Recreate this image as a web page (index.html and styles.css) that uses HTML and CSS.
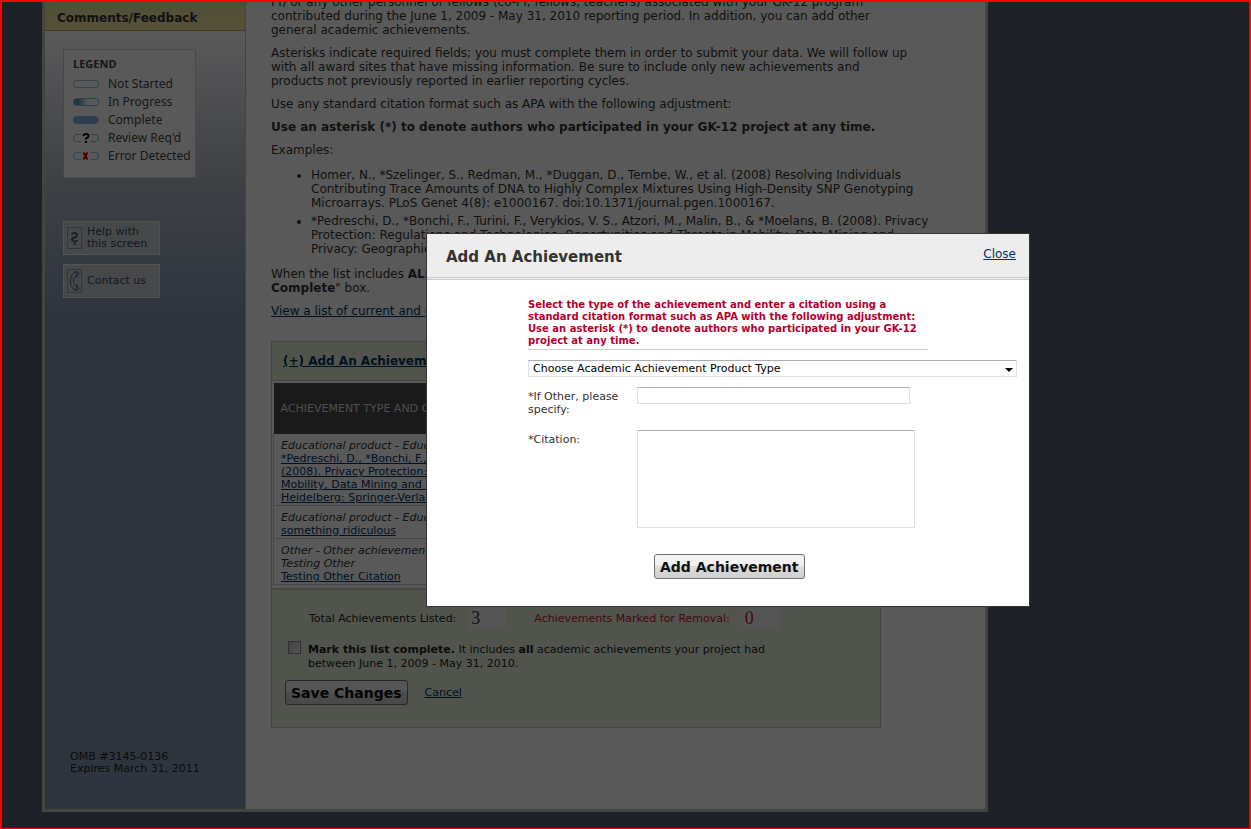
FILE: index.html
```html
<!DOCTYPE html>
<html lang="en">
<head>
  <meta charset="UTF-8">
  <title>Add An Achievement</title>
  <link rel="stylesheet" href="styles.css">
</head>
<body>
  <div class="wrapper">
    <!-- Sidebar -->
    <div class="sidebar">
      <a class="nav-item" href="#">Comments/Feedback</a>

      <div class="legend">
        <h3>LEGEND</h3>
        <ul>
          <li>
            <svg width="26" height="10" viewBox="0 0 26 10"><rect class="pill" x="0.5" y="1.5" width="25" height="7" rx="3"/></svg>
            Not Started
          </li>
          <li>
            <svg width="26" height="10" viewBox="0 0 26 10">
              <defs><linearGradient id="half"><stop offset="0.2" stop-color="#5f9cc4"/><stop offset="0.6" stop-color="#fff"/></linearGradient></defs>
              <rect class="pill half" x="0.5" y="1.5" width="25" height="7" rx="3"/>
            </svg>
            In Progress
          </li>
          <li>
            <svg width="26" height="10" viewBox="0 0 26 10"><rect class="pill full" x="0.5" y="1.5" width="25" height="7" rx="3"/></svg>
            Complete
          </li>
          <li>
            <svg width="26" height="10" viewBox="0 0 26 10">
              <path class="pill" d="M8 1.5H4a3.5 3.5 0 0 0 0 7h4M18 1.5h4a3.5 3.5 0 0 1 0 7h-4"/>
              <path class="mark" d="M10.5 3q0-2 2.5-2t2.5 2q0 1-1.5 1.8T13 6.5M13 8v2"/>
            </svg>
            Review Req'd
          </li>
          <li>
            <svg width="26" height="10" viewBox="0 0 26 10">
              <path class="pill" d="M8 1.5H4a3.5 3.5 0 0 0 0 7h4M18 1.5h4a3.5 3.5 0 0 1 0 7h-4"/>
              <path class="mark error" d="M10.5 1.5l4 7M14.5 1.5l-4 7"/>
            </svg>
            Error Detected
          </li>
        </ul>
      </div>

      <button type="button" class="side-btn">
        <svg width="16" height="24" viewBox="0 0 16 24">
          <rect x="1.5" y="1.5" width="14" height="21"/>
          <path class="thick" d="M6 8.5q0-1.500 2.500-1.500t2.500 2-2.500 2.500-2.500 2 2.500 2 2.500-1.500M8.500 17v2"/>
        </svg>
        <span>Help with<br>this screen</span>
      </button>
      <button type="button" class="side-btn">
        <svg width="16" height="28" viewBox="0 0 16 28">
          <rect x="1.5" y="2.5" width="14" height="23"/>
          <path class="phone" d="M10 4.500C2.500 7 2.500 21 10 23.500l3-1.500-2-4-2 .5c-2-2-2-7 0-9l2 .5 2-4zM10 4.500l1 5M10 23.500l1-5.500"/>
        </svg>
        <span>Contact us</span>
      </button>

      <p class="omb">OMB #3145-0136<br>Expires March 31, 2011</p>
    </div>

    <!-- Main content -->
    <div class="main">
      <div class="intro">
        <p>PI) or any other personnel or fellows (co-PI, fellows, teachers) associated with your GK-12 program<br>contributed during the June 1, 2009 - May 31, 2010 reporting period. In addition, you can add other<br>general academic achievements.</p>
        <p>Asterisks indicate required fields; you must complete them in order to submit your data. We will follow up<br>with all award sites that have missing information. Be sure to include only new achievements and<br>products not previously reported in earlier reporting cycles.</p>
        <p>Use any standard citation format such as APA with the following adjustment:</p>
        <p><strong>Use an asterisk (*) to denote authors who participated in your GK-12 project at any time.</strong></p>
        <p>Examples:</p>
        <ul>
          <li>Homer, N., *Szelinger, S., Redman, M., *Duggan, D., Tembe, W., et al. (2008) Resolving Individuals<br>Contributing Trace Amounts of DNA to Highly Complex Mixtures Using High-Density SNP Genotyping<br>Microarrays. PLoS Genet 4(8): e1000167. doi:10.1371/journal.pgen.1000167.</li>
          <li>*Pedreschi, D., *Bonchi, F., Turini, F., Verykios, V. S., Atzori, M., Malin, B., &amp; *Moelans, B. (2008). Privacy<br>Protection: Regulations and Technologies, Opportunities and Threats in Mobility, Data Mining and<br>Privacy: Geographic</li>
        </ul>
        <p>When the list includes <strong>ALL</strong> achievements, check the "<strong>Mark This List<br>Complete</strong>" box.</p>
        <p><a href="#">View a list of current and past achievements</a></p>
      </div>

      <form class="list-box">
        <a class="add-link" href="#">(+) Add An Achievement</a>
        <div class="table-wrap">
          <table>
            <thead>
              <tr><th>ACHIEVEMENT TYPE AND CITATION</th></tr>
            </thead>
            <tbody>
              <tr>
                <td><em>Educational product - Educational product</em><br><a href="#">*Pedreschi, D., *Bonchi, F., Turini, F., Verykios, V. S.<br>(2008). Privacy Protection: Regulations and Threats in<br>Mobility, Data Mining and Privacy: Geographic Knowledge.<br>Heidelberg: Springer-Verlag.</a></td>
              </tr>
              <tr>
                <td><em>Educational product - Educational product</em><br><a href="#">something ridiculous</a></td>
              </tr>
              <tr>
                <td><em>Other - Other achievement<br>Testing Other</em><br><a href="#">Testing Other Citation</a></td>
              </tr>
            </tbody>
          </table>
        </div>
        <div class="totals">
          <label for="total">Total Achievements Listed:</label>
          <input type="text" id="total" value="3" readonly>
          <label class="removal" for="removed">Achievements Marked for Removal:</label>
          <input class="removal" type="text" id="removed" value="0" readonly>
        </div>
        <div class="complete">
          <input type="checkbox" id="complete">
          <label for="complete"><strong>Mark this list complete.</strong> It includes <strong>all</strong> academic achievements your project had<br>between June 1, 2009 - May 31, 2010.</label>
        </div>
        <div class="actions">
          <button type="button" class="btn">Save Changes</button>
          <a href="#">Cancel</a>
        </div>
      </form>
    </div>
  </div>

  <div class="overlay"></div>

  <!-- Add achievement dialog -->
  <div class="modal" role="dialog" aria-labelledby="modal-title">
    <div class="modal-header">
      <h2 id="modal-title">Add An Achievement</h2>
      <a href="#">Close</a>
    </div>
    <form class="modal-body">
      <p class="notice">Select the type of the achievement and enter a citation using a<br>standard citation format such as APA with the following adjustment:<br>Use an asterisk (*) to denote authors who participated in your GK-12<br>project at any time.</p>
      <div class="select-wrap">
        <select aria-label="Product type">
          <option>Choose Academic Achievement Product Type</option>
        </select>
        <svg width="8" height="4" viewBox="0 0 8 4"><path d="M0 0h8L4 4z"/></svg>
      </div>
      <div class="field">
        <label for="other">*If Other, please specify:</label>
        <input type="text" id="other">
      </div>
      <div class="field">
        <label for="citation">*Citation:</label>
        <textarea id="citation"></textarea>
      </div>
      <button type="button" class="btn">Add Achievement</button>
    </form>
  </div>
</body>
</html>
```
FILE: styles.css
```css
* {
  box-sizing: border-box;
}
body {
  position: relative;
  margin: 0;
  min-height: 100vh;
  padding: 0 40px 16px;
  border: 2px solid #f00;
  background: #595e75;
  color: #333;
  font-family: Verdana, "DejaVu Sans", sans-serif;
  font-size: 12px;
  line-height: 14px;
  overflow: hidden;
}
a {
  color: #036;
}
p, ul, h2, h3 {
  margin: 0;
}
.wrapper {
  display: flex;
  max-width: 946px;
  border: 3px solid #c2c5b8;
  border-top: 0;
  background: #fff;
}

/* Sidebar */
.sidebar {
  display: flex;
  flex-direction: column;
  align-items: flex-start;
  flex: 0 0 201px;
  border-right: 1px solid #b9c0cc;
  background: linear-gradient(#fff 30px, #f0f1f4 60px, #b4b8c4 180px, #8697b4 310px);
}
.nav-item {
  align-self: stretch;
  padding: 9px 12px 5px;
  border-bottom: 1px solid #a8a67c;
  background: linear-gradient(#e6dfa4, #f5eb9c);
  color: #333;
  font-weight: bold;
  text-decoration: none;
}
.legend {
  width: 133px;
  margin: 18px 0 43px 18px;
  padding: 7px 0 12px 9px;
  border: 1px solid #c4cbd6;
  background: #fff;
  color: #444;
  font-family: "Noto Sans", sans-serif;
  white-space: nowrap;
}
.legend h3 {
  font-size: 11px;
  line-height: 14px;
  padding-bottom: 4px;
}
.legend ul {
  padding: 0;
  list-style: none;
}
.legend li {
  display: flex;
  align-items: center;
  gap: 9px;
  line-height: 18px;
}
.pill {
  fill: #fff;
  stroke: #8fbbe0;
}
.pill.half {
  fill: url(#half);
}
.pill.full {
  fill: #7fb2dc;
}
.mark {
  fill: none;
  stroke: #111;
  stroke-width: 2;
}
.mark.error {
  stroke: #c00;
}
.side-btn {
  display: flex;
  align-items: center;
  gap: 5px;
  width: 97px;
  height: 34px;
  margin: 0 0 9px 18px;
  padding: 0 2px;
  border: 1px solid #ededed;
  background: #ccced4;
  color: #346;
  font-family: inherit;
  font-size: 11px;
  line-height: 12px;
  text-align: left;
  white-space: nowrap;
}
.side-btn svg {
  flex: none;
  fill: none;
  stroke: #8d98b0;
}
.side-btn .thick {
  stroke: #4a5878;
  stroke-width: 2;
}
.side-btn .phone {
  stroke: #4d6088;
}
.omb {
  margin: auto 0 34px 25px;
  color: #222;
  font-size: 11px;
  line-height: 12px;
}

/* Main content */
.main {
  flex: 1;
  min-width: 0;
  padding: 0 25px 81px;
}
.intro {
  margin-top: -7px;
  white-space: nowrap;
}
.intro p {
  margin-bottom: 9px;
}
.intro ul {
  margin: 11px 0;
  padding-left: 40px;
}
.intro li {
  margin-bottom: 4px;
}
.list-box {
  max-width: 610px;
  margin-top: 23px;
  padding-bottom: 22px;
  border: 1px solid #c5c9bd;
  background: #e9f1dc;
  color: #222;
  font-size: 11px;
}
.add-link {
  display: block;
  padding: 12px 11px;
  font-size: 12px;
  font-weight: bold;
}
.table-wrap {
  padding: 2px 1px 3px;
  border: 1px solid #c5c9bd;
  border-width: 1px 0 2px;
  background: #fff;
}
table {
  width: 100%;
  border-collapse: collapse;
}
th {
  height: 51px;
  padding: 0 7px;
  background: #4b4b4b;
  color: #ddd;
  font-size: 11px;
  font-weight: normal;
  text-align: left;
}
td {
  padding: 5px 7px 1px;
  border: 1px solid #ccc;
  border-top: 0;
  color: #333;
  line-height: 13px;
}
.totals {
  display: flex;
  align-items: center;
  margin: 18px 0 0 37px;
}
.totals input {
  width: 37px;
  height: 21px;
  margin: 0 28px 0 13px;
  padding: 0 2px;
  border: 0;
  background: #f4f4f4;
  color: #333;
  font-family: "Liberation Serif", serif;
  font-size: 18px;
}
.totals .removal {
  color: #c8102e;
}
.complete {
  display: flex;
  gap: 7px;
  margin: 12px 0 9px 16px;
}
.complete label {
  padding-top: 2px;
}
.complete input {
  flex: none;
  width: 13px;
  height: 13px;
  margin: 0;
  appearance: none;
  border: 1px solid #8e8f8f;
  background: linear-gradient(135deg, #b5bbc4, #eee);
}
.actions {
  display: flex;
  align-items: center;
  gap: 17px;
  padding-left: 13px;
}
.btn {
  height: 25px;
  padding: 0 5px;
  border: 1px solid #707070;
  border-radius: 3px;
  background: linear-gradient(#f2f2f2 45%, #ddd 50%, #cfcfcf);
  color: #111;
  font-family: inherit;
  font-size: 14px;
  font-weight: bold;
}

/* Dialog */
.overlay {
  position: absolute;
  inset: 0;
  background: rgba(0, 0, 0, 0.65);
}
.modal {
  position: absolute;
  top: 231px;
  left: 424px;
  width: 604px;
  border: 1px solid #333;
  background: #fff;
}
.modal-header {
  display: flex;
  justify-content: space-between;
  align-items: flex-start;
  padding: 13px 13px 10px 19px;
  border-bottom: 3px double #ccc;
  background: #ededed;
}
.modal-header h2 {
  font-size: 15px;
  line-height: 20px;
}
.modal-body {
  padding: 19px 12px 27px 101px;
  font-size: 11px;
  line-height: 13px;
}
.notice {
  max-width: 400px;
  padding-bottom: 2px;
  margin-bottom: 10px;
  border-bottom: 1px solid #ccc;
  color: #b5002f;
  font-size: 10px;
  font-weight: bold;
  line-height: 12px;
  white-space: nowrap;
}
.select-wrap {
  position: relative;
  margin-bottom: 10px;
}
.select-wrap svg {
  position: absolute;
  top: 8px;
  right: 4px;
  pointer-events: none;
}
select, .field input, textarea {
  display: block;
  border: 1px solid #dde1e6;
  border-top-color: #abadb3;
  background: #fff;
  color: #000;
  font-family: inherit;
  font-size: 11px;
}
select {
  width: 100%;
  height: 17px;
  padding: 0 4px;
  appearance: none;
}
.field {
  display: grid;
  grid-template-columns: 109px 1fr;
  align-items: start;
  margin-bottom: 14px;
}
.field label {
  padding: 3px 8px 0 0;
}
.field input {
  width: 273px;
  height: 17px;
}
textarea {
  width: 278px;
  height: 98px;
  resize: none;
}
.modal-body .btn {
  display: block;
  margin: 26px 0 0 126px;
}
```
